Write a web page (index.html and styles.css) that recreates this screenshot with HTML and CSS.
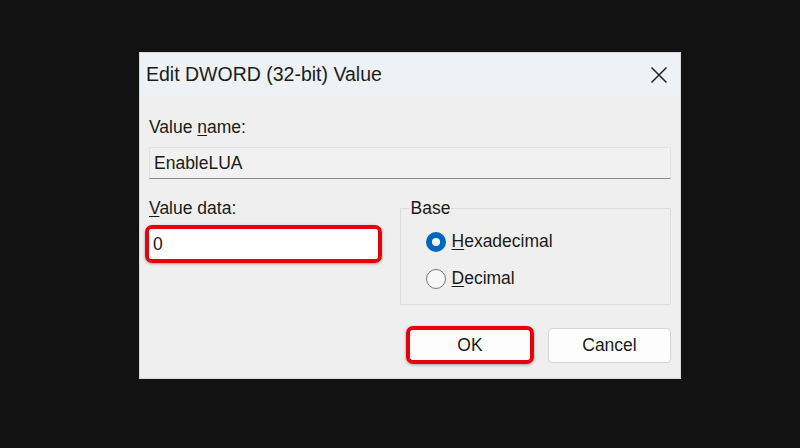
FILE: index.html
```html
<!DOCTYPE html>
<html lang="en">
<head>
    <meta charset="UTF-8">
    <meta name="viewport" content="width=device-width, initial-scale=1.0">
    <title>Edit DWORD (32-bit) Value</title>
    <link rel="stylesheet" href="styles.css">
</head>
<body>
    <div class="dialog">
        <!-- Title bar -->
        <div class="title-bar">
            <span class="title">Edit DWORD (32-bit) Value</span>
            <svg class="close" width="18" height="18" viewBox="0 0 18 18">
                <path d="M1.5 1.5 L16.5 16.5 M16.5 1.5 L1.5 16.5" stroke="#222" stroke-width="1.5" fill="none"/>
            </svg>
        </div>

        <div class="content">
            <div class="label">Value <u>n</u>ame:</div>
            <div class="name-box">EnableLUA</div>

            <div class="data-row">
                <div class="data-col">
                    <div class="label"><u>V</u>alue data:</div>
                    <div class="highlight">
                        <div class="data-box">0</div>
                    </div>
                </div>
                <fieldset class="base">
                    <legend>Base</legend>
                    <div class="radio-row">
                        <span class="radio checked"></span>
                        <span><u>H</u>exadecimal</span>
                    </div>
                    <div class="radio-row">
                        <span class="radio"></span>
                        <span><u>D</u>ecimal</span>
                    </div>
                </fieldset>
            </div>

            <div class="buttons">
                <div class="highlight btn-wrap">
                    <button class="btn">OK</button>
                </div>
                <button class="btn">Cancel</button>
            </div>
        </div>
    </div>
</body>
</html>
```

FILE: styles.css
```css
body {
    margin: 0;
    padding: 52px 0 0 139px;
    background-color: #121212;
    font-family: "Liberation Sans", Arial, sans-serif;
    color: #1a1a1a;
    height: 448px;
    box-sizing: border-box;
    overflow: hidden;
}

.dialog {
    width: 542px;
    height: 327px;
    background-color: #efefef;
    box-sizing: border-box;
    border: 1px solid #d8d8d8;
}

.title-bar {
    height: 43px;
    background-color: #eef2f7;
    display: flex;
    align-items: center;
    justify-content: space-between;
    padding: 0 12px 0 6px;
}

.title {
    font-size: 19.5px;
    color: #1c1c1c;
}

.content {
    padding: 0 9px 0 9px;
}

.label {
    font-size: 17.5px;
    line-height: 20px;
}

.content > .label {
    margin-top: 21px;
}

u {
    text-underline-offset: 2px;
}

.name-box {
    margin-top: 10px;
    height: 32px;
    box-sizing: border-box;
    background-color: #f1f1f1;
    border: 1px solid #e2e2e2;
    border-bottom: 1px solid #8c8c8c;
    font-size: 17.5px;
    line-height: 30px;
    padding-left: 4px;
}

.data-row {
    display: flex;
    margin-top: 19px;
}

.data-col {
    width: 236px;
}

.highlight {
    border: 4px solid #e8000b;
    border-radius: 7px;
    box-shadow: 0 1px 3px rgba(0, 0, 0, 0.35);
}

.data-col .highlight {
    margin: 7px 3px 0 -4px;
}

.data-box {
    height: 30px;
    background-color: #fff;
    font-size: 17.5px;
    line-height: 30px;
    padding-left: 4px;
    border-radius: 3px;
}

.base {
    margin: 0 0 0 15px;
    padding: 5px 0 0 25px;
    width: 272px;
    height: 107px;
    box-sizing: border-box;
    border: 1px solid #dcdcdc;
    min-width: 0;
}

.base legend {
    font-size: 17.5px;
    line-height: 20px;
    padding: 0 1px;
    margin-left: -16px;
}

.radio-row {
    display: flex;
    align-items: center;
    gap: 6px;
    font-size: 17.5px;
    height: 37px;
}

.radio {
    width: 20px;
    height: 20px;
    box-sizing: border-box;
    border-radius: 50%;
    border: 1px solid #777;
    background-color: #f7f7f7;
}

.radio.checked {
    border: 6px solid #0067c0;
    background-color: #fff;
}

.buttons {
    display: flex;
    justify-content: flex-end;
    align-items: center;
    gap: 14px;
    margin-top: 21px;
}

.btn {
    width: 123px;
    height: 35px;
    background-color: #fdfdfd;
    border: 1px solid #d4d4d4;
    border-radius: 4px;
    font-family: "Liberation Sans", Arial, sans-serif;
    font-size: 17.5px;
    color: #1a1a1a;
}

.btn-wrap .btn {
    width: 120px;
    height: 30px;
    border: none;
    display: block;
}
```
